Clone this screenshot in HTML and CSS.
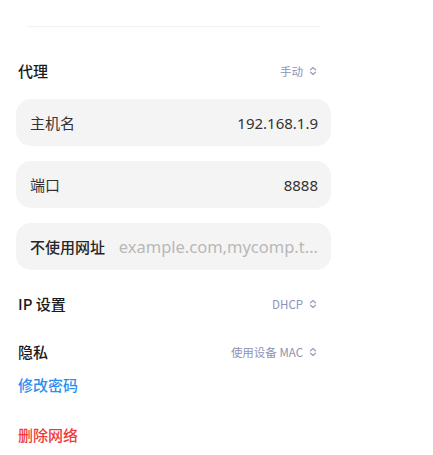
FILE: index.html
```html
<!DOCTYPE html>
<html lang="zh">
<head>
<meta charset="utf-8">
<link rel="stylesheet" href="styles.css">
</head>
<body>
<div class="panel">
  <div class="divider"></div>
  <div class="row head">
    <span class="title">代理</span>
    <span class="select">手动<svg class="chev" viewBox="0 0 8 10" width="8" height="10"><path d="M1.5 3.8 L4 1.5 L6.5 3.8 M1.5 6.2 L4 8.5 L6.5 6.2" fill="none" stroke="#9ca1bd" stroke-width="1.3" stroke-linecap="round" stroke-linejoin="round"/></svg></span>
  </div>
  <div class="cards">
    <div class="card"><span class="label">主机名</span><span class="value">192.168.1.9</span></div>
    <div class="card"><span class="label">端口</span><span class="value">8888</span></div>
    <div class="card"><span class="label strong">不使用网址</span><span class="placeholder">example.com,mycomp.t...</span></div>
  </div>
  <div class="row head ip">
    <span class="title">IP 设置</span>
    <span class="select">DHCP<svg class="chev" viewBox="0 0 8 10" width="8" height="10"><path d="M1.5 3.8 L4 1.5 L6.5 3.8 M1.5 6.2 L4 8.5 L6.5 6.2" fill="none" stroke="#9ca1bd" stroke-width="1.3" stroke-linecap="round" stroke-linejoin="round"/></svg></span>
  </div>
  <div class="row head priv">
    <span class="title">隐私</span>
    <span class="select">使用设备 MAC<svg class="chev" viewBox="0 0 8 10" width="8" height="10"><path d="M1.5 3.8 L4 1.5 L6.5 3.8 M1.5 6.2 L4 8.5 L6.5 6.2" fill="none" stroke="#9ca1bd" stroke-width="1.3" stroke-linecap="round" stroke-linejoin="round"/></svg></span>
  </div>
  <div class="link blue">修改密码</div>
  <div class="link red">删除网络</div>
</div>
</body>
</html>
```
FILE: styles.css
```css
html, body {
  margin: 0;
  padding: 0;
  background: #ffffff;
  font-family: "Noto Sans CJK SC", "Noto Sans", sans-serif;
  color: #1f1f1f;
}
.panel {
  width: 315px;
  padding: 26px 0 0 16px;
  display: flex;
  flex-direction: column;
}
.divider {
  height: 1px;
  background: #f2f2f2;
  margin: 0 10px 0 11px;
}
.row {
  display: flex;
  align-items: center;
  justify-content: space-between;
  padding: 0 14px 0 2px;
}
.head {
  height: 24px;
  margin-top: 32px;
}
.title {
  font-size: 15px;
  font-weight: 500;
  color: #1a1a1a;
  line-height: 20px;
}
.select {
  display: flex;
  align-items: center;
  gap: 6px;
  font-size: 11.5px;
  color: #8e93b2;
  font-weight: 400;
}
.chev { display: block; }
.cards {
  display: flex;
  flex-direction: column;
  gap: 15px;
  margin-top: 16px;
}
.card {
  height: 47px;
  border-radius: 15px;
  background: #f4f4f4;
  display: flex;
  align-items: center;
  justify-content: space-between;
  padding: 0 13px 0 14px;
  box-sizing: border-box;
}
.label {
  font-size: 15px;
  color: #333333;
  font-weight: 400;
}
.label.strong {
  font-weight: 500;
  color: #262626;
}
.value {
  font-size: 15px;
  color: #333333;
  font-weight: 400;
  font-family: "Noto Sans", "Noto Sans CJK SC", sans-serif;
}
.placeholder {
  font-size: 16.5px;
  color: #b8b8b8;
  font-family: "Noto Sans", sans-serif;
}
.ip { margin-top: 22px; }
.priv { margin-top: 24px; }
.link {
  font-size: 15px;
  font-weight: 500;
  padding-left: 2px;
  line-height: 20px;
}
.blue { color: #2b8ef0; margin-top: 11px; }
.red { color: #f03a3a; margin-top: 30px; }
```
